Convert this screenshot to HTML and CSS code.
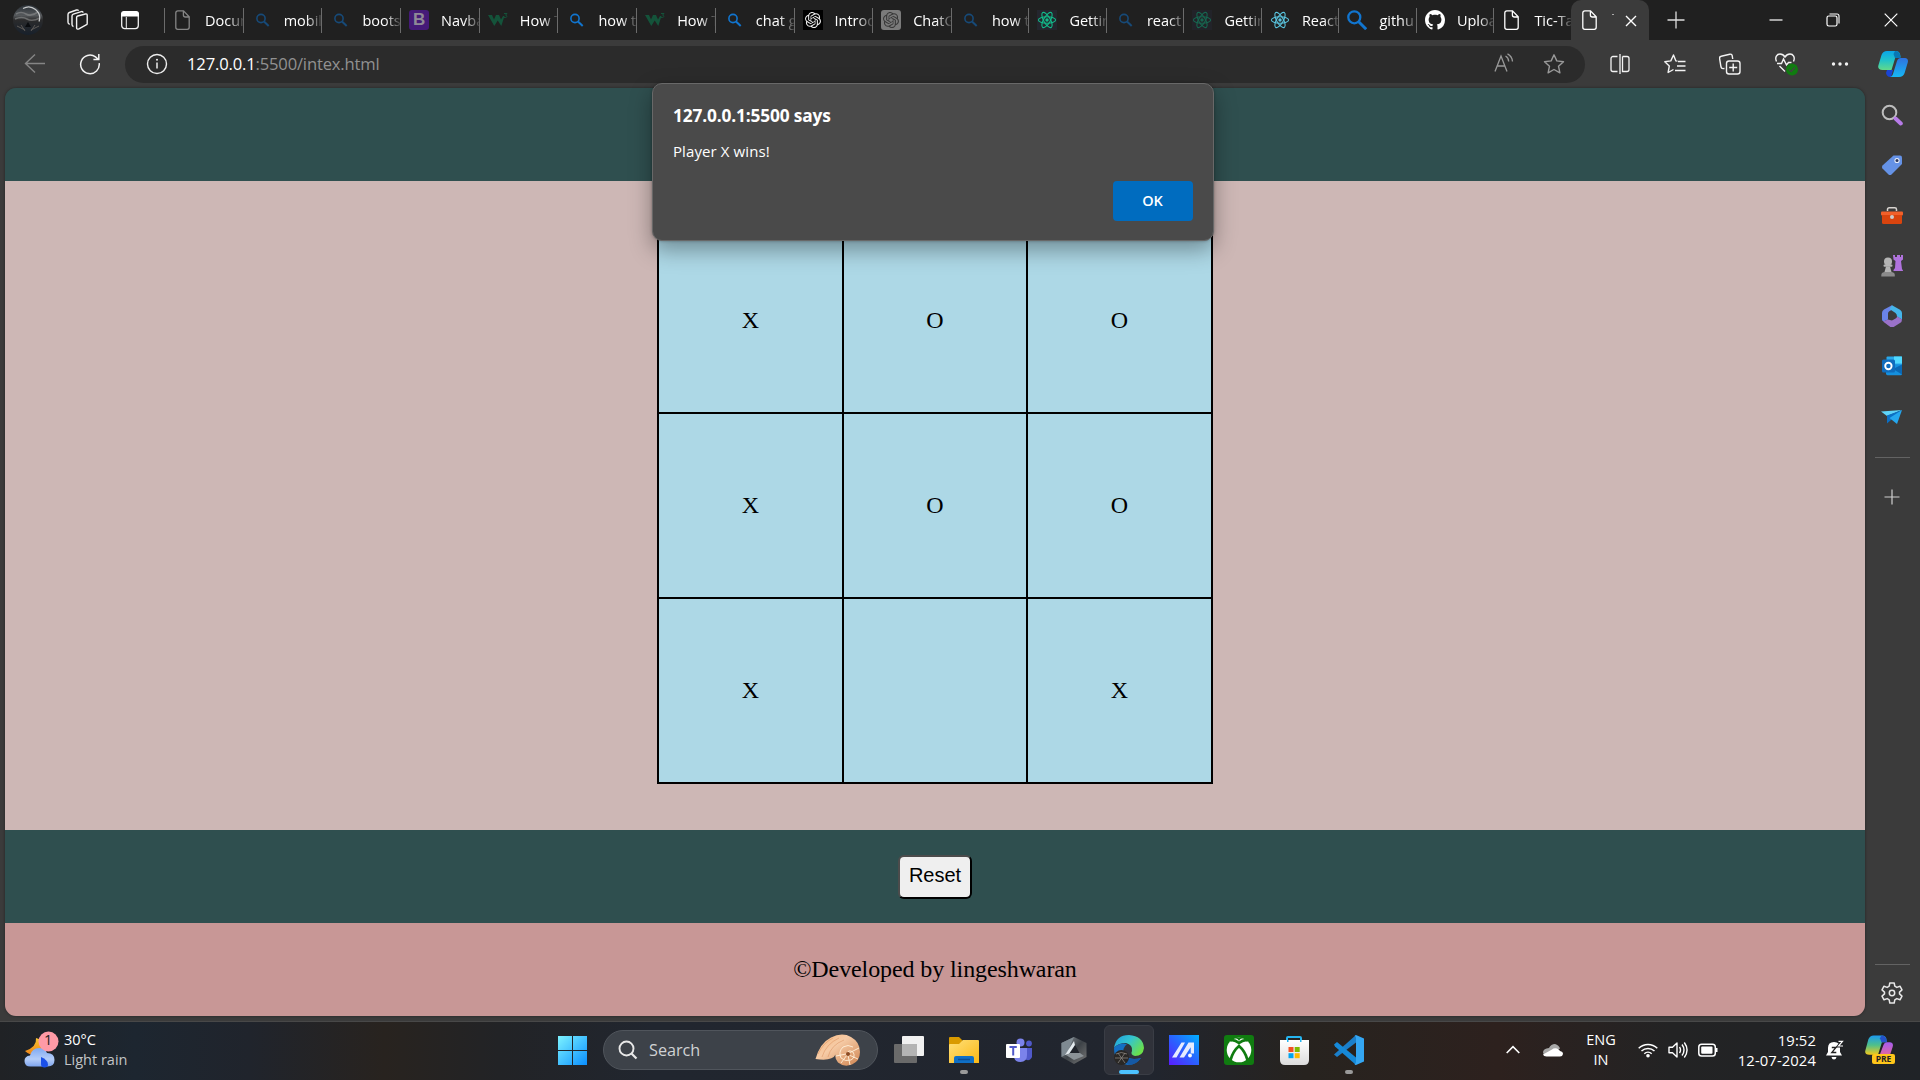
FILE: index.html
```
<!DOCTYPE html>
<html lang="en">
<head>
<meta charset="utf-8">
<title>Tic-Tac-Toe</title>
<link rel="stylesheet" href="styles.css">
</head>
<body>
<svg class="defs" aria-hidden="true">
  <defs>
    <linearGradient id="gWin" x1="0" y1="0" x2="1" y2="1"><stop offset="0" stop-color="#7df3ff"/><stop offset="1" stop-color="#0a8fff"/></linearGradient>
    <linearGradient id="gCopA" x1="0" y1="0" x2="0" y2="1"><stop offset="0" stop-color="#0aa5e8"/><stop offset=".5" stop-color="#22c3c8"/><stop offset="1" stop-color="#62d98a"/></linearGradient>
    <linearGradient id="gCopB" x1="0" y1="0" x2="0" y2="1"><stop offset="0" stop-color="#2f72e0"/><stop offset="1" stop-color="#16b8f5"/></linearGradient>
    <linearGradient id="gCopC" x1="0" y1="0" x2="0" y2="1"><stop offset="0" stop-color="#1b9af0"/><stop offset=".5" stop-color="#4fc08a"/><stop offset="1" stop-color="#f5c91a"/></linearGradient>
    <linearGradient id="gCopD" x1="0" y1="0" x2="0" y2="1"><stop offset="0" stop-color="#a45cf0"/><stop offset="1" stop-color="#f26a8a"/></linearGradient>
    <linearGradient id="gEdge" x1="0" y1="0" x2="1" y2=".6"><stop offset="0" stop-color="#1f9fe0"/><stop offset=".5" stop-color="#34c4cf"/><stop offset="1" stop-color="#6be04a"/></linearGradient>
    <linearGradient id="gMy" x1="0" y1="1" x2="1" y2="0"><stop offset="0" stop-color="#5a1cff"/><stop offset=".5" stop-color="#2a62ff"/><stop offset="1" stop-color="#00b0ff"/></linearGradient>
    <linearGradient id="gFold" x1="0" y1="0" x2="1" y2="1"><stop offset="0" stop-color="#ffe07a"/><stop offset="1" stop-color="#fbb814"/></linearGradient>
    <linearGradient id="gShell" x1="0" y1="0" x2="1" y2="1"><stop offset="0" stop-color="#f8b77c"/><stop offset=".4" stop-color="#f6cba6"/><stop offset="1" stop-color="#cf8450"/></linearGradient>
    <linearGradient id="gCloud" x1="0" y1="0" x2="0" y2="1"><stop offset="0" stop-color="#7fa9f2"/><stop offset=".6" stop-color="#b4cdf8"/><stop offset="1" stop-color="#7ea5ee"/></linearGradient>
    <linearGradient id="gMoon" x1="0" y1="0" x2="0" y2="1"><stop offset="0" stop-color="#f6c430"/><stop offset="1" stop-color="#ee8218"/></linearGradient>
    <linearGradient id="gHex" x1="0" y1="0" x2="1" y2="1"><stop offset="0" stop-color="#8b949b"/><stop offset=".5" stop-color="#3d4247"/><stop offset="1" stop-color="#777"/></linearGradient>
    <linearGradient id="gBag" x1="0" y1="0" x2="0" y2="1"><stop offset="0" stop-color="#fff"/><stop offset="1" stop-color="#dcdcdc"/></linearGradient>
    <linearGradient id="gPhoto" x1="0" y1="0" x2="0" y2="1"><stop offset="0" stop-color="#2a3036"/><stop offset=".35" stop-color="#55585b"/><stop offset=".5" stop-color="#2b2b2c"/><stop offset="1" stop-color="#17202b"/></linearGradient>
    <symbol id="page" viewBox="0 0 20 20"><path d="M4.800.9h5.700l5.700 5.800v10.600a2 2 0 0 1-2 2H4.800a2 2 0 0 1-2-2V2.900a2 2 0 0 1 2-2zM10.400 1v4a2 2 0 0 0 2 2h3.700" fill="none" stroke="currentColor" stroke-width="1.300"/></symbol>
    <symbol id="mag" viewBox="0 0 20 20"><circle cx="9" cy="8.500" r="4.100" fill="none" stroke="currentColor" stroke-width="1.600"/><path d="M12 11.500l4.700 4.500" stroke="currentColor" stroke-width="2"/></symbol>
    <symbol id="w3" viewBox="0 0 20 20"><path d="M0 5h4l2 4.500L8 5h3l2 4.500L15 6h1.500L13.300 16 9.700 10.500 6.300 16z" fill="currentColor"/><path d="M16 3.500h3l-1.500 1.700c2.200.2 1.800 3-1.500 2.200" fill="none" stroke="currentColor"/></symbol>
    <symbol id="react" viewBox="0 0 20 20"><g fill="none" stroke="currentColor" stroke-width="1.100"><ellipse cx="10" cy="10" rx="8.600" ry="3.300"/><ellipse cx="10" cy="10" rx="8.600" ry="3.300" transform="rotate(60 10 10)"/><ellipse cx="10" cy="10" rx="8.600" ry="3.300" transform="rotate(120 10 10)"/></g><circle cx="10" cy="10" r="1.700" fill="currentColor"/></symbol>
    <symbol id="knot" viewBox="0 0 24 24"><path fill="currentColor" d="M22.280 9.820a5.980 5.980 0 0 0-.520-4.910 6.050 6.050 0 0 0-6.510-2.900A6.070 6.070 0 0 0 4.980 4.180a5.980 5.980 0 0 0-4 2.900 6.050 6.050 0 0 0 .740 7.100 5.980 5.980 0 0 0 .510 4.910 6.050 6.050 0 0 0 6.510 2.900A5.980 5.980 0 0 0 13.260 24a6.060 6.060 0 0 0 5.770-4.210 5.990 5.990 0 0 0 4-2.900 6.060 6.060 0 0 0-.750-7.070zm-9.020 12.610a4.480 4.480 0 0 1-2.880-1.040l.140-.080 4.780-2.760a.8.8 0 0 0 .390-.680v-6.740l2.020 1.170.040.050v5.580a4.500 4.500 0 0 1-4.490 4.490zM3.600 18.300a4.470 4.470 0 0 1-.530-3.010l.140.090 4.780 2.760a.77.77 0 0 0 .780 0l5.840-3.370v2.330l-.030.060-4.830 2.790a4.500 4.500 0 0 1-6.150-1.650zM2.340 7.900a4.480 4.480 0 0 1 2.370-1.980v5.680a.77.77 0 0 0 .390.680l5.810 3.350-2.020 1.170h-.070l-4.830-2.790A4.500 4.500 0 0 1 2.340 7.900zm16.600 3.850l-5.840-3.390 2.020-1.160h.070l4.830 2.790a4.490 4.490 0 0 1-.680 8.100v-5.680a.79.79 0 0 0-.400-.660zm2.010-3.020l-.140-.090-4.780-2.780a.78.78 0 0 0-.780 0L9.410 9.230V6.900l.030-.060 4.830-2.790a4.500 4.500 0 0 1 6.680 4.680zM8.310 12.860l-2.020-1.160-.040-.060V6.070a4.500 4.500 0 0 1 7.380-3.450l-.140.080-4.780 2.760a.8.8 0 0 0-.400.680zm1.090-2.360l2.600-1.500 2.610 1.500v3l-2.600 1.500-2.610-1.500z"/></symbol>
  </defs>
</svg>

<div class="tabstrip">
  <svg class="avatar" viewBox="0 0 30 30"><circle cx="15" cy="15" r="15" fill="url(#gPhoto)"/><path d="M3 9q5-3 10 0t12-2M2 14q7-3 12 0t13-1" fill="none" stroke="#8d8f90" stroke-width="1.600" opacity=".6"/><path d="M10 3.500a11 11 0 0 1 16 13" fill="none" stroke="#c7c9ca" stroke-width="1.200"/><path d="M15 17l-3 5h6z" fill="#0a0c0f"/><path d="M4 21l8 4M26 21l-8 4M8 20l4 6M22 20l-4 6" stroke="#77706a" stroke-width="1" opacity=".7"/></svg>
  <svg class="strip-btn" viewBox="0 0 22 22"><g fill="none" stroke="#f2f2f2" stroke-width="1.400" stroke-linejoin="round"><path d="M9.600 8.500q0-1.200 1.100-1.500l7.700-2q1.800-.4 1.800 1.400v8q0 1.200-1.100 1.500l-7.200 4q-2.300.8-2.300-1.200z"/><path d="M6.500 17.500Q5 17.300 5 15.600V7q0-1.400 1.300-1.800l8-2.600q1.500-.4 1.900 1"/><path d="M2.800 15.200Q1 14.900 1 13.200V5.500Q1 4 2.400 3.500L9.500 1q1.500-.4 2 .8"/></g></svg>
  <svg class="strip-btn strip-btn-panel" viewBox="0 0 20 20"><rect x="1.700" y="2" width="16.600" height="16.600" rx="3" fill="none" stroke="#f2f2f2" stroke-width="1.300"/><path d="M1 6.500V4a3 3 0 0 1 3-3h12a3 3 0 0 1 3 3v2.500z" fill="#fff"/><path d="M6.300 7v11" stroke="#f2f2f2"/></svg>

  <div class="tabs">
    <div class="tab"><svg class="fav grey"><use href="#page"/></svg><span>Docum</span></div>
    <div class="tab"><svg class="fav navy"><use href="#mag"/></svg><span>mobil</span></div>
    <div class="tab"><svg class="fav navy"><use href="#mag"/></svg><span>boots</span></div>
    <div class="tab"><b class="fav bootstrap">B</b><span>Navba</span></div>
    <div class="tab"><svg class="fav pine"><use href="#w3"/></svg><span>How T</span></div>
    <div class="tab"><svg class="fav blue"><use href="#mag"/></svg><span>how t</span></div>
    <div class="tab"><svg class="fav pine"><use href="#w3"/></svg><span>How T</span></div>
    <div class="tab"><svg class="fav blue"><use href="#mag"/></svg><span>chat g</span></div>
    <div class="tab"><svg class="fav onblack"><use href="#knot"/></svg><span>Introd</span></div>
    <div class="tab"><svg class="fav ongrey"><use href="#knot"/></svg><span>ChatG</span></div>
    <div class="tab narrow"><svg class="fav navy"><use href="#mag"/></svg><span>how t</span></div>
    <div class="tab narrow"><svg class="fav mint"><use href="#react"/></svg><span>Gettin</span></div>
    <div class="tab narrow"><svg class="fav navy"><use href="#mag"/></svg><span>react</span></div>
    <div class="tab narrow"><svg class="fav mintdim"><use href="#react"/></svg><span>Gettin</span></div>
    <div class="tab narrow"><svg class="fav cyan"><use href="#react"/></svg><span>React</span></div>
    <div class="tab narrow"><svg class="fav blue" viewBox="0 0 20 20"><circle cx="7.300" cy="7.300" r="6" fill="none" stroke="currentColor" stroke-width="2.300"/><path d="M11.700 11.700l7.500 7.500" stroke="currentColor" stroke-width="3"/></svg><span>githu</span></div>
    <div class="tab narrow"><svg class="fav" viewBox="0 0 16 16"><path fill="#fff" d="M8 0C3.580 0 0 3.580 0 8c0 3.540 2.290 6.530 5.470 7.590.4.070.550-.170.550-.380 0-.190-.010-.820-.010-1.490-2.010.370-2.530-.490-2.690-.940-.090-.230-.480-.940-.820-1.130-.280-.150-.680-.520-.010-.530.630-.010 1.080.580 1.230.820.720 1.210 1.870.870 2.330.660.070-.520.280-.870.510-1.070-1.780-.200-3.640-.890-3.640-3.950 0-.870.310-1.590.820-2.150-.080-.200-.360-1.020.080-2.120 0 0 .670-.210 2.200.820.640-.180 1.320-.270 2-.270s1.360.090 2 .270c1.530-1.040 2.200-.820 2.200-.820.440 1.100.160 1.920.080 2.120.510.560.820 1.270.820 2.150 0 3.070-1.870 3.750-3.650 3.950.290.250.540.730.540 1.480 0 1.070-.010 1.930-.010 2.200 0 .210.150.460.550.380A8 8 0 0 0 16 8c0-4.420-3.580-8-8-8z"/></svg><span>Uploa</span></div>
    <div class="tab narrow last"><svg class="fav white"><use href="#page"/></svg><span>Tic-Ta</span></div>
    <div class="tab active"><svg class="fav white"><use href="#page"/></svg><i class="sliver"></i><svg class="tab-close" viewBox="0 0 12 12"><path d="M1 1l10 10M11 1L1 11" stroke="#fff" stroke-width="1.400"/></svg></div>
  </div>
  <svg class="new-tab" viewBox="0 0 18 18"><path d="M9 .5v17M.5 9h17" stroke="#ddd" stroke-width="1.300"/></svg>
  <div class="window-controls">
    <svg viewBox="0 0 14 14"><path d="M.5 7h13" stroke="#fff" stroke-width="1.200"/></svg>
    <svg viewBox="0 0 14 14"><rect x="1" y="3" width="10" height="10" rx="1.800" fill="none" stroke="#fff" stroke-width="1.200"/><path d="M3.500 1h7.500a2 2 0 0 1 2 2v7.500" fill="none" stroke="#fff" stroke-width="1.100"/></svg>
    <svg viewBox="0 0 14 14"><path d="M.7.7l12.600 12.600M13.300.7L.7 13.300" stroke="#fff" stroke-width="1.200"/></svg>
  </div>
</div>

<div class="toolbar">
  <svg class="nav-btn" viewBox="0 0 22 22"><path d="M21 10.500H1.500M11 1.500l-9.500 9 9.500 9" fill="none" stroke="#858585" stroke-width="1.400"/></svg>
  <svg class="nav-btn" viewBox="0 0 22 22"><path d="M20.200 10.200A9.300 9.300 0 1 1 16.500 3.900l3 2.600M19.800 1v5.600h-5.400" fill="none" stroke="#f3f3f3" stroke-width="1.500"/></svg>
  <div class="address">
    <svg class="info" viewBox="0 0 22 22"><circle cx="11" cy="11" r="9.500" fill="none" stroke="#eee" stroke-width="1.400"/><path d="M11 9.500v6" stroke="#eee" stroke-width="1.500"/><circle cx="11" cy="6.800" r="1" fill="#eee"/></svg>
    <span class="url"><span class="host">127.0.0.1</span>:5500/intex.html</span>
    <svg class="addr-btn" viewBox="0 0 22 22"><path d="M2 18.500L8 3l6 15.500M4.200 13h7.600M12.500 3q3 1.500 3.200 5.500M14.500.8q4.600 2.400 5 7.700" fill="none" stroke="#999" stroke-width="1.300"/></svg>
    <svg class="addr-btn" viewBox="0 0 22 22"><path d="M11 1.800l2.800 6.100 6.700.8-5 4.500 1.400 6.600-5.900-3.300-5.900 3.300 1.400-6.600-5-4.500 6.700-.8z" fill="none" stroke="#999" stroke-width="1.400" stroke-linejoin="round"/></svg>
  </div>
  <svg class="tool" viewBox="0 0 22 22"><path d="M8.500 3.500H4a2 2 0 0 0-2 2v11a2 2 0 0 0 2 2h4.500M13.500 3.500H18a2 2 0 0 1 2 2v11a2 2 0 0 1-2 2h-4.500V3.500M11 1v20" fill="none" stroke="#f3f3f3" stroke-width="1.300"/></svg>
  <svg class="tool" viewBox="0 0 22 22"><path d="M13.500 8.100l-1.600-.2L9.500 2 6.800 7.900l-6 .8 4.500 4.300-1.200 6.500 5.400-3M14 8.500h7.500M13 13h8.500M11 17.500h10.500" fill="none" stroke="#f3f3f3" stroke-width="1.400" stroke-linejoin="round"/></svg>
  <svg class="tool" viewBox="0 0 22 22"><g fill="none" stroke="#f3f3f3" stroke-width="1.400"><rect x="7.500" y="8" width="13.500" height="13" rx="2.500"/><path d="M14.200 10.500v8M10.200 14.500h8M5.500 15.500l-1.500.1a2 2 0 0 1-2-1.600L.6 5.500a2 2 0 0 1 1.600-2.300l8.600-2a2 2 0 0 1 2.400 1.500l.5 3.300"/></g></svg>
  <svg class="tool heart" viewBox="0 0 25 24"><path d="M2.500 9.500C.5 5 3 2 6 2c2.200 0 3.700 1 5 3 1.300-2 2.800-3 5-3 3 0 5.500 3 3.500 7.500M3 11.500h4.500l2-4.500 3 6 2-2.500h3M5.500 14l5.500 5.500" fill="none" stroke="#f3f3f3" stroke-width="1.400"/><circle cx="18" cy="17.500" r="6" fill="#107c10"/><path d="M15 17.500l2.200 2 3.600-4" fill="none" stroke="#444" stroke-width="1.300"/></svg>
  <svg class="tool" viewBox="0 0 22 22"><g fill="#f3f3f3"><circle cx="4.500" cy="11" r="1.700"/><circle cx="11" cy="11" r="1.700"/><circle cx="17.500" cy="11" r="1.700"/></g></svg>
  <svg class="copilot" viewBox="0 0 30 28"><path d="M9 1h9q3 0 4 3l.5 3h-5l-4 13H4.500Q-1 19.500.5 15l3-10Q5 1 9 1z" fill="url(#gCopA)"/><path d="M17 1q4 0 5 3.500l.8 3.500H17l-1.500-4z" fill="#0877b5"/><path d="M9 20h6l-2 7q-4 .5-5-4z" fill="#1944d4"/><path d="M21 27h-9q2.500-.5 3.300-4l3.700-12Q20 8 23 8h4q4 .5 2.600 5l-3 10q-1.400 4-5.600 4z" fill="url(#gCopB)"/></svg>
</div>

<div class="viewport">
  <div class="site">
    <header class="site-header"></header>
    <main class="arena">
      <div class="board">
        <div>X</div><div>O</div><div>O</div>
        <div>X</div><div>O</div><div>O</div>
        <div>X</div><div></div><div>X</div>
      </div>
    </main>
    <div class="controls"><button class="reset">Reset</button></div>
    <footer class="credit">©Developed by lingeshwaran</footer>
  </div>
  <aside class="sidebar">
    <svg viewBox="0 0 22 22"><circle cx="8.500" cy="8.500" r="6.800" fill="none" stroke="#bdbdbd" stroke-width="2"/><path d="M14.500 14.500l5.300 5" stroke="#b77be8" stroke-width="4" stroke-linecap="round"/></svg>
    <svg viewBox="0 0 22 22"><path d="M12.500 1.500H19a2 2 0 0 1 2 2V10L10.500 20.500q-1.500 1-3 0l-6-6q-1.300-1.500 0-3z" fill="#6592e6"/><circle cx="16" cy="6.500" r="2.600" fill="#e8edf8"/><circle cx="16" cy="6.500" r="1.500" fill="#2b3960"/></svg>
    <svg viewBox="0 0 22 22"><path d="M6.500 6V4.500q0-1.700 1.700-1.700h5.600q1.700 0 1.700 1.700V6" fill="none" stroke="#d8d4d0" stroke-width="1.500"/><rect y="6.500" width="22" height="4" rx="1" fill="#f2602a"/><path d="M1 10h20v7.500q0 1.500-1.500 1.500h-17Q1 19 1 17.500z" fill="#d9440e"/><circle cx="11" cy="12" r="2" fill="#ccc"/></svg>
    <svg viewBox="0 0 22 22"><path d="M12 0h2v2h2V0h3v2h1V0h2v4.500l-2 1.500 1 8 1 1.500V16h-9.500v-1l1.500-2 .5-7-2-1.500z" fill="#b073dd"/><g fill="#b5b5b5"><circle cx="7" cy="6.500" r="4"/><rect x="2.500" y="9.500" width="9" height="2.300" rx="1"/><path d="M5 11.500h4l1.500 5.500h-7z"/></g><path d="M.3 21.500V20q0-2.500 3-3h7.500q3 .5 3 3v1.500z" fill="#8b8b8b"/></svg>
    <svg viewBox="0 0 22 22"><path d="M11 .3L3 4.600Q1 6 1 8v6.500q0 2 2 1.700l4-1.700V8.500q0-1.500 1.300-2.200l4-2.300z" fill="#6a84ea"/><path d="M11 .3l8 4.400q2 1.300 2 3.300v6.500l-5-3q0-2.500-1.500-3.500L8.500 4z" fill="#45b5ea"/><path d="M2 16.500l5-2 3 .8q1 .4 2-.2l3-1.800q1-.6 1-2l5 3.200q0 2.500-2 3.600l-6.500 4q-1.500.8-3 0z" fill="#9a72c9"/></svg>
    <svg viewBox="0 0 22 22"><rect x="5.500" y="1.500" width="15.500" height="15" rx="1" fill="#28a8ea"/><path d="M13 1.500h8v7h-8z" fill="#50d9ff"/><path d="M5 9l16 .5v9.500q0 1.300-1.300 1.300H6.500Q5 20 5 18.500z" fill="#1490df"/><path d="M21 9.500v10L12 14z" fill="#0a68b5"/><rect x="1" y="4.500" width="13" height="13" rx="1.500" fill="#0f6cbd"/><circle cx="7.400" cy="11" r="3.200" fill="none" stroke="#fff" stroke-width="1.900"/></svg>
    <svg viewBox="0 0 22 22"><path d="M21 4L0 5.500 6 10z" fill="#5fd4f8"/><path d="M21 4L6 9.500v8l4-3.500z" fill="#0b6fc4"/><path d="M21 4L8.500 12l7.500 6z" fill="#25a7ee"/></svg>
    <hr>
    <svg class="add" viewBox="0 0 16 16"><path d="M8 .5v15M.5 8h15" stroke="#d0d0d0" stroke-width="1.200"/></svg>
    <hr class="lower">
    <svg class="gear" viewBox="0 0 22 22"><path d="M8.800 1h4.400l.6 3.200 2 1.200 3.200-1.200 2 3.700-2.500 2.200v1.800l2.500 2.200-2 3.700-3.200-1.200-2 1.200-.6 3.200H8.800l-.6-3.200-2-1.200L3 17.800l-2-3.700 2.500-2.200v-1.800L1 7.900l2-3.700 3.200 1.200 2-1.200z" fill="none" stroke="#e8e8e8" stroke-width="1.500" stroke-linejoin="round"/><circle cx="11" cy="11" r="2.700" fill="none" stroke="#e8e8e8" stroke-width="1.500"/></svg>
  </aside>
</div>

<div class="dialog">
  <h1>127.0.0.1:5500 says</h1>
  <p>Player X wins!</p>
  <button class="ok">OK</button>
</div>

<div class="taskbar">
  <div class="weather">
    <svg viewBox="0 0 36 38"><path d="M12 7q1 9-11 13 5 5 12 4 8-2 8-9-1-6-9-8z" fill="url(#gMoon)"/><path d="M6.500 35.500q-6 0-6-5.500 0-5 5.500-5.500Q8 17 15 17q6 0 8 5 7.500 0 7.500 7 0 6.500-7 6.500z" fill="url(#gCloud)"/><path d="M17 26q7 3 7 7.500 0 3-3.500 3T17 33z" fill="#1a4fe8"/><circle cx="24.500" cy="10.500" r="10" fill="#ff9aa6"/></svg>
    <span class="badge">1</span>
    <div><div>30°C</div><div class="dim">Light rain</div></div>
  </div>

  <div class="apps">
    <svg class="start" viewBox="0 0 29 29"><path d="M0 0h14v14H0zM15 0h14v14H15zM0 15h14v14H0zM15 15h14v14H15z" fill="url(#gWin)"/></svg>
    <div class="search">
      <svg viewBox="0 0 20 20"><circle cx="8.500" cy="8.500" r="7" fill="none" stroke="#e8e8e8" stroke-width="1.900"/><path d="M13.500 13.500l5 5" stroke="#e8e8e8" stroke-width="2.200"/></svg>
      <span>Search</span>
      <svg class="shell" viewBox="0 0 46 32"><path d="M.5 25Q5 9 16 3.500 27-2 36 3q9 5 9 15 0 9-8 12.500-8 3-14-2-3.500-4-2.500-8-3 7-20 4.500z" fill="url(#gShell)"/><g fill="none" stroke="#fff0da" stroke-width=".9"><path d="M32 20q1-5 6-2 3 5-2 8-6 2-10-2-3-6 2-11 5-3 10 0M31 20l-10 2M32 21l-6 8M33 21l2 10M34 21l9 4M34 19l10-5"/></g><path d="M3 20Q8 9 18 4M7 23q4-13 17-19M13 23Q16 11 29 6" fill="none" stroke="#d98d5c" stroke-width="1" opacity=".5"/><circle cx="33" cy="20" r="2" fill="#8c4b24"/></svg>
    </div>
    <div class="app"><svg viewBox="0 0 30 30"><rect y="9" width="23" height="19" rx="1" fill="#6a6a6a"/><rect x="8" y="1" width="22" height="20" rx="1" fill="#f1f1f1"/><path d="M8 9h15v12H8z" fill="#b4b4b4"/></svg></div>
    <div class="app running"><svg viewBox="0 0 30 30"><path d="M0 3q0-1 1-1h9l4 4-3 5H0z" fill="#d99a00"/><path d="M0 10q0-1 1-1h9l4-4h15q1 0 1 1v22H0z" fill="url(#gFold)"/><path d="M5 28v-5q0-2 2-2h16q2 0 2 2v5z" fill="#0f6fc6"/><path d="M9 24.500h12" stroke="#0a4e96" stroke-width="1.500"/></svg></div>
    <div class="app"><svg viewBox="0 0 30 30"><circle cx="16.500" cy="7.500" r="4" fill="#7b83eb"/><circle cx="25" cy="8.500" r="2.900" fill="#5059c9"/><path d="M20 13h8v9q-2 5-8 2z" fill="#5059c9"/><path d="M10 13h13v7q0 7-6.500 7T10 21z" fill="#7b83eb"/><rect x="2" y="9" width="14" height="14" rx="1" fill="#fff"/><path d="M5.500 12h7.300M9.200 12v8.500" stroke="#5059c9" stroke-width="2"/></svg></div>
    <div class="app"><svg viewBox="0 0 30 30"><path d="M15 2l12.500 6v14L15 29 2.500 22V8z" fill="url(#gHex)"/><path d="M15 2L2.500 8v14L8 19z" fill="#7f8a92"/><path d="M15 8l6 11H7z" fill="#20242b"/><path d="M15 6L6 20l4-1 6-9z" fill="#e3eaee"/><path d="M7 20l4-2h10l4 3-10 4z" fill="#8b9297"/></svg></div>
    <div class="app current"><svg viewBox="0 0 30 30"><path d="M0 13Q2 0 15 0q14 1 15 13-1 8-9 8-5-1-3-5 1-6-6-8-8 0-12 5z" fill="url(#gEdge)"/><path d="M0 13q5-6 13-4-5 4-3 10 5 7 17 4-5 7-13 7Q0 28 0 13z" fill="#146fc4"/><path d="M10 17q2 7 9 7 5 0 8-1-5 7-12 7-7-4-5-13z" fill="#1559a5"/><circle cx="7.500" cy="22.500" r="7.500" fill="#292725"/><path d="M2 19q5-3 11 0M1 23h13M4 18l7 10M11 18L4 28" stroke="#89847f" stroke-width=".8" fill="none"/></svg></div>
    <div class="app"><svg viewBox="0 0 30 30"><path d="M0 0h30v30H0z" fill="url(#gMy)"/><path d="M3 22.500L12.500 7.500h3.500L7.500 22.500zM10.500 22.500L19.500 7.500H25v11h-3.300v-6.300L15 22.500z" fill="#e6ecff"/><circle cx="21" cy="20.500" r="1.900" fill="#fff"/></svg></div>
    <div class="app"><svg viewBox="0 0 30 30"><rect width="30" height="30" rx="3" fill="#107c10"/><circle cx="15" cy="15" r="12.300" fill="#fff"/><path d="M6 5.500q4-1.500 9 2.500 5-4 9-2.500M6.500 25Q9 16 15 11q6 5 8.500 14" fill="none" stroke="#107c10" stroke-width="2.800"/><path d="M9 3q6 0 6 4 0-4 6-4z" fill="#107c10"/></svg></div>
    <div class="app"><svg viewBox="0 0 30 30"><path d="M8 6V3q0-1 1-1h12q1 0 1 1v3" fill="none" stroke="#25b5f0" stroke-width="2"/><path d="M1 5h29v20q0 5-5 5H6q-5 0-5-5z" fill="url(#gBag)"/><path d="M9.500 12h5v5h-5z" fill="#f25022"/><path d="M15.700 12h5v5h-5z" fill="#7fba00"/><path d="M9.500 18.200h5v5h-5z" fill="#00a4ef"/><path d="M15.700 18.200h5v5h-5z" fill="#ffb900"/><path d="M8 5h1.500v2H8zM21 5h1.500v2H21z" fill="#25b5f0"/></svg></div>
    <div class="app running"><svg viewBox="0 0 30 30"><path d="M0 19.500L3 22 22 7.500V0z" fill="#1b7fca"/><path d="M0 9.500L3 7l19 15.500V30L1 11.500z" fill="#1689d8"/><path d="M22 0l8 3.500v23L22 30q-1 0-1.500-1 1.500 0 1.500-2V3q0-2-1.500-2z" fill="#34a6f2"/></svg></div>
  </div>

  <div class="tray">
    <svg class="chevron" viewBox="0 0 14 14"><path d="M.7 10L7 3.700 13.300 10" fill="none" stroke="#fff" stroke-width="1.600"/></svg>
    <svg class="onedrive" viewBox="0 0 20 14"><path d="M6 5Q8 1 12 1q4 1 5 4.500l-7 4-6 3Q0 12 0 9q.5-3.500 6-4z" fill="#a8a8a8"/><path d="M3.500 13.500q-3 0-3.500-2l9-5q2-1.800 5-1 2.500 1 3 2.500 3 .5 3 3-.5 2.500-3 2.500z" fill="#fff"/></svg>
    <div class="lang">ENG<br>IN</div>
    <svg class="status wifi" viewBox="0 0 20 16"><g fill="none" stroke="#fff" stroke-width="1.500"><path d="M.7 6.200a13.500 13.500 0 0 1 18.600 0M3.500 9a9.500 9.500 0 0 1 13 0M6.300 11.700a5.500 5.500 0 0 1 7.400 0"/></g><circle cx="10" cy="13.700" r="1.800" fill="#fff"/></svg>
    <svg class="status" viewBox="0 0 20 20"><path d="M1 7.200h3.500L9 3v14l-4.500-4.200H1zM11.500 7q2 3 0 6M14 4.500q4 5.500 0 11M16.300 2.500q5.500 7.500 0 15" fill="none" stroke="#fff" stroke-width="1.400" stroke-linejoin="round"/></svg>
    <svg class="status" viewBox="0 0 20 20"><rect x=".8" y="4.200" width="16.500" height="11.800" rx="2.800" fill="none" stroke="#fff" stroke-width="1.500"/><rect x="3.200" y="6.500" width="11.300" height="7.200" rx="1" fill="#fff"/><path d="M18.500 8v4" stroke="#fff" stroke-width="2"/></svg>
    <div class="clock">19:52<br>12-07-2024</div>
    <svg class="bell" viewBox="0 0 18 20"><path d="M8 2q6 0 6 6v4l2 3.500H0L2 12V8q0-6 6-6zM5.500 17h5q-.5 2.500-2.500 2.500T5.500 17z" fill="#fff"/><path d="M12.500 1h4l-4 5h4" fill="none" stroke="#202124" stroke-width="3"/><path d="M12.500 1.300H16.500L12.500 6h4.500" fill="none" stroke="#fff" stroke-width="1.200"/><path d="M5.800 7.500h4.200l-4.200 5h4.500" fill="none" stroke="#222" stroke-width="1.300"/></svg>
    <div class="copilot-pre"><svg viewBox="0 0 30 28"><path d="M9 0h9q3 0 4 3l.5 4h-5l-4 13H4.500Q-1 19.500.5 15l3-11Q5 0 9 0z" fill="url(#gCopC)"/><path d="M17 0q4 0 5 3.500l.8 3.500H17l-1.500-4z" fill="#2452c9"/><path d="M21 24h-9q2.500-.5 3.300-4l3.700-10Q20 7 23 7h3q4 .5 2.600 5l-3 9q-1.400 3-4.600 3z" fill="url(#gCopD)"/></svg><b>PRE</b></div>
  </div>
</div>
</body>
</html>
```
FILE: styles.css
```
* { box-sizing: border-box; }

body {
  margin: 0;
  width: 1920px;
  height: 1080px;
  overflow: hidden;
  display: flex;
  flex-direction: column;
  position: relative;
  background: #3b3b3b;
  color: #fff;
  font-family: "Open Sans", "Noto Sans", sans-serif;
}

svg { display: block; flex: none; }
.defs { position: absolute; width: 0; height: 0; }

/* Tab strip */
.tabstrip {
  height: 40px;
  flex: none;
  display: flex;
  align-items: center;
  background: #202020;
  padding-left: 13px;
}
.avatar { width: 30px; height: 30px; }
.strip-btn { width: 22px; height: 22px; margin-left: 24px; }
.strip-btn-panel { width: 20px; height: 20px; margin-left: 31px; }
.tabs { display: flex; margin-left: 24px; height: 40px; }
.tab {
  width: 78.7px;
  height: 40px;
  display: flex;
  align-items: center;
  padding-left: 9px;
  background: linear-gradient(#6b6b6b, #6b6b6b) 0 8px / 1px 25px no-repeat;
  font-size: 14.500px;
  overflow: hidden;
}
.tab.narrow { width: 77.500px; }
.tab span {
  flex: 1;
  margin-left: 12px;
  overflow: hidden;
  white-space: nowrap;
  -webkit-mask-image: linear-gradient(90deg, #000 60%, rgba(0,0,0,.15));
  mask-image: linear-gradient(90deg, #000 60%, rgba(0,0,0,.15));
}
.fav { width: 20px; height: 20px; flex: none; }
.grey { color: #858585; }
.white { color: #fff; }
.navy { color: #174a78; }
.blue { color: #1175cf; }
.pine { color: #14533a; }
.onblack { background: #000; color: #eee; padding: 2px; }
.ongrey { background: #7b7b7b; color: #383838; border-radius: 3px; padding: 2px; }
.mint { background: #24262e; color: #12bb8b; }
.mintdim { background: #222329; color: #176650; }
.cyan { color: #5ac4de; }
.bootstrap {
  background: #451a78;
  color: #8f8996;
  border-radius: 3px;
  font: bold 17px/20px "Liberation Sans", sans-serif;
  text-align: center;
}
.tab.active {
  width: 78px;
  background: #3b3b3b;
  border-radius: 10px 10px 0 0;
}
.sliver { width: 2px; height: 1px; margin: -11px 0 0 12px; background: #aaa; }
.tab-close { width: 12px; height: 12px; margin: 1px 0 0 11px; }
.new-tab { width: 18px; height: 18px; margin-left: 18px; }
.window-controls { display: flex; margin-left: 84px; gap: 43.500px; }
.window-controls svg { width: 14px; height: 14px; }

/* Address bar */
.toolbar {
  height: 48px;
  flex: none;
  display: flex;
  align-items: center;
  padding: 0 12px 0 24px;
}
.nav-btn { width: 22px; height: 22px; margin-right: 33px; }
.nav-btn + .nav-btn { margin-right: 24px; }
.address {
  width: 1460px;
  height: 37px;
  border-radius: 19px;
  background: #2b2b2b;
  display: flex;
  align-items: center;
  padding: 0 20px 0 21px;
}
.info { width: 22px; height: 22px; }
.url { flex: 1; margin-left: 19px; font-size: 16.600px; color: #919191; letter-spacing: -.17px; line-height: 24px; }
.host { color: #fff; }
.addr-btn { width: 22px; height: 22px; margin-left: 28px; }
.tool { width: 22px; height: 22px; margin-left: 33px; }
.address + .tool { margin-left: 24px; }
.tool.heart { width: 25px; height: 24px; margin-right: -3px; }
.copilot { width: 30px; height: 28px; margin-left: 27px; }

/* Web page and Edge sidebar */
.viewport { height: 933px; flex: none; display: flex; padding: 0 0 5px 5px; }
.site {
  width: 1860px;
  border-radius: 11px;
  overflow: hidden;
  box-shadow: 0 0 3px rgba(0,0,0,.4);
  color: #000;
  font-family: "Liberation Serif", serif;
  font-size: 24px;
}
.site-header { height: 93px; background: #2f4f4f; }
.arena {
  height: 649px;
  background: #cdb7b5;
  display: flex;
  justify-content: center;
  align-items: center;
}
.board {
  display: grid;
  grid-template: 182px 183px 183px / 183px 182px 183px;
  gap: 2px;
  padding: 2px;
  background: #000;
}
.board div { background: #add8e6; display: flex; align-items: center; justify-content: center; }
.controls {
  height: 93px;
  background: #2f4f4f;
  display: flex;
  align-items: center;
  justify-content: center;
}
.reset {
  width: 74px;
  height: 44px;
  margin-top: 1px;
  padding: 0 0 3px;
  border: 2px solid;
  border-color: #4c4c4c #000 #000 #4c4c4c;
  border-radius: 6px;
  background: #efefef;
  color: #000;
  font: 20px "Liberation Sans", Arial, sans-serif;
}
.credit {
  height: 93px;
  background: #c89796;
  display: flex;
  align-items: center;
  justify-content: center;
  letter-spacing: -.1px;
}

.sidebar {
  width: 55px;
  height: 928px;
  display: flex;
  flex-direction: column;
  align-items: center;
  padding: 16px 1px 0 0;
}
.sidebar svg { width: 22px; height: 22px; margin-bottom: 28.250px; }
.sidebar hr { width: 35px; height: 1px; margin: 1px 0 31px; border: 0; background: #636363; flex: none; }
.sidebar .add { width: 16px; height: 16px; margin-bottom: 0; }
.sidebar .lower { margin: auto 0 17px; }
.sidebar .gear { margin-bottom: 12px; }

/* Alert box over the page */
.dialog {
  position: absolute;
  left: 652px;
  top: 83px;
  width: 562px;
  height: 158px;
  padding: 20px 20px 19px 20px;
  border: 1px solid #686868;
  border-radius: 10px;
  background: #4a4a4a;
  box-shadow: 0 9px 22px rgba(0,0,0,.35), 0 0 3px rgba(0,0,0,.3);
  display: flex;
  flex-direction: column;
}
.dialog h1 { margin: 0; font-size: 17.300px; line-height: 24px; letter-spacing: -.15px; }
.dialog p { margin: 13px 0 0; font-size: 15px; line-height: 20px; letter-spacing: .1px; }
.ok {
  width: 80px;
  height: 40px;
  margin: auto 0 0 auto;
  padding: 0 1px 2px 0;
  border: 0;
  border-radius: 4px;
  background: #006cbf;
  color: #fff;
  font: 600 14.500px "Open Sans", sans-serif;
}

/* Taskbar */
.taskbar {
  height: 59px;
  flex: none;
  display: flex;
  align-items: center;
  padding-bottom: 2px;
  border-top: 1px solid #484848;
  background: linear-gradient(90deg, #202225, #1d2630 7%, #20242c 13%, #28231f 20%, #222326 26%, #21262f 34%, #21252e 60%, #27231f 68%, #2d211e 78%, #232324 87%, #202327);
  font-size: 14.500px;
  line-height: 20px;
}
.weather { width: 533px; display: flex; align-items: center; padding-left: 24px; position: relative; }
.weather svg { width: 36px; height: 38px; margin-right: 4px; }
.badge { position: absolute; left: 44px; top: 0; color: #222; }
.dim { color: #c2c4c6; }
.apps { display: flex; align-items: center; }
.start { width: 29px; height: 29px; margin-left: 25px; }
.search {
  width: 275px;
  height: 40px;
  margin: 0 3px 0 16px;
  border-radius: 20px;
  border: 1px solid #50555c;
  background: #3d4249;
  display: flex;
  align-items: center;
  padding: 0 16px 0 14px;
}
.search svg { width: 20px; height: 20px; }
.search span { flex: 1; margin-left: 11px; font-size: 16.200px; color: #d0d2d4; }
.search .shell { width: 46px; height: 32px; }
.app { width: 55px; height: 50px; display: flex; align-items: center; justify-content: center; position: relative; }
.app svg { width: 30px; height: 30px; }
.app.running::after, .app.current::after {
  content: "";
  position: absolute;
  bottom: 1px;
  width: 8px;
  height: 4px;
  border-radius: 2px;
  background: #9a9a9a;
}
.app.current { width: 50px; margin: 0 2.500px; border-radius: 6px; border: 1px solid #3a3d45; background: #30323a; }
.app.current::after { width: 20px; background: #4cc2ff; bottom: 0; }

.tray { margin-left: auto; display: flex; align-items: center; padding-right: 25px; }
.chevron { width: 14px; height: 14px; }
.onedrive { width: 20px; height: 14px; margin-left: 23px; }
.lang { width: 52px; margin-left: 12px; text-align: center; }
.status { width: 20px; height: 20px; margin-left: 10px; }
.status.wifi { height: 16px; margin-left: 11px; }
.clock { width: 98px; text-align: right; font-size: 14.800px; letter-spacing: .1px; }
.bell { width: 18px; height: 20px; margin-left: 10px; }
.copilot-pre { width: 30px; height: 30px; margin-left: 21px; position: relative; }
.copilot-pre svg { width: 29px; height: 28px; }
.copilot-pre b {
  position: absolute;
  left: 7px;
  top: 19px;
  width: 23px;
  height: 10px;
  border-radius: 2px;
  background: #ffc61a;
  color: #222;
  font: bold 8.500px/10px "Open Sans", sans-serif;
  text-align: center;
}
```
